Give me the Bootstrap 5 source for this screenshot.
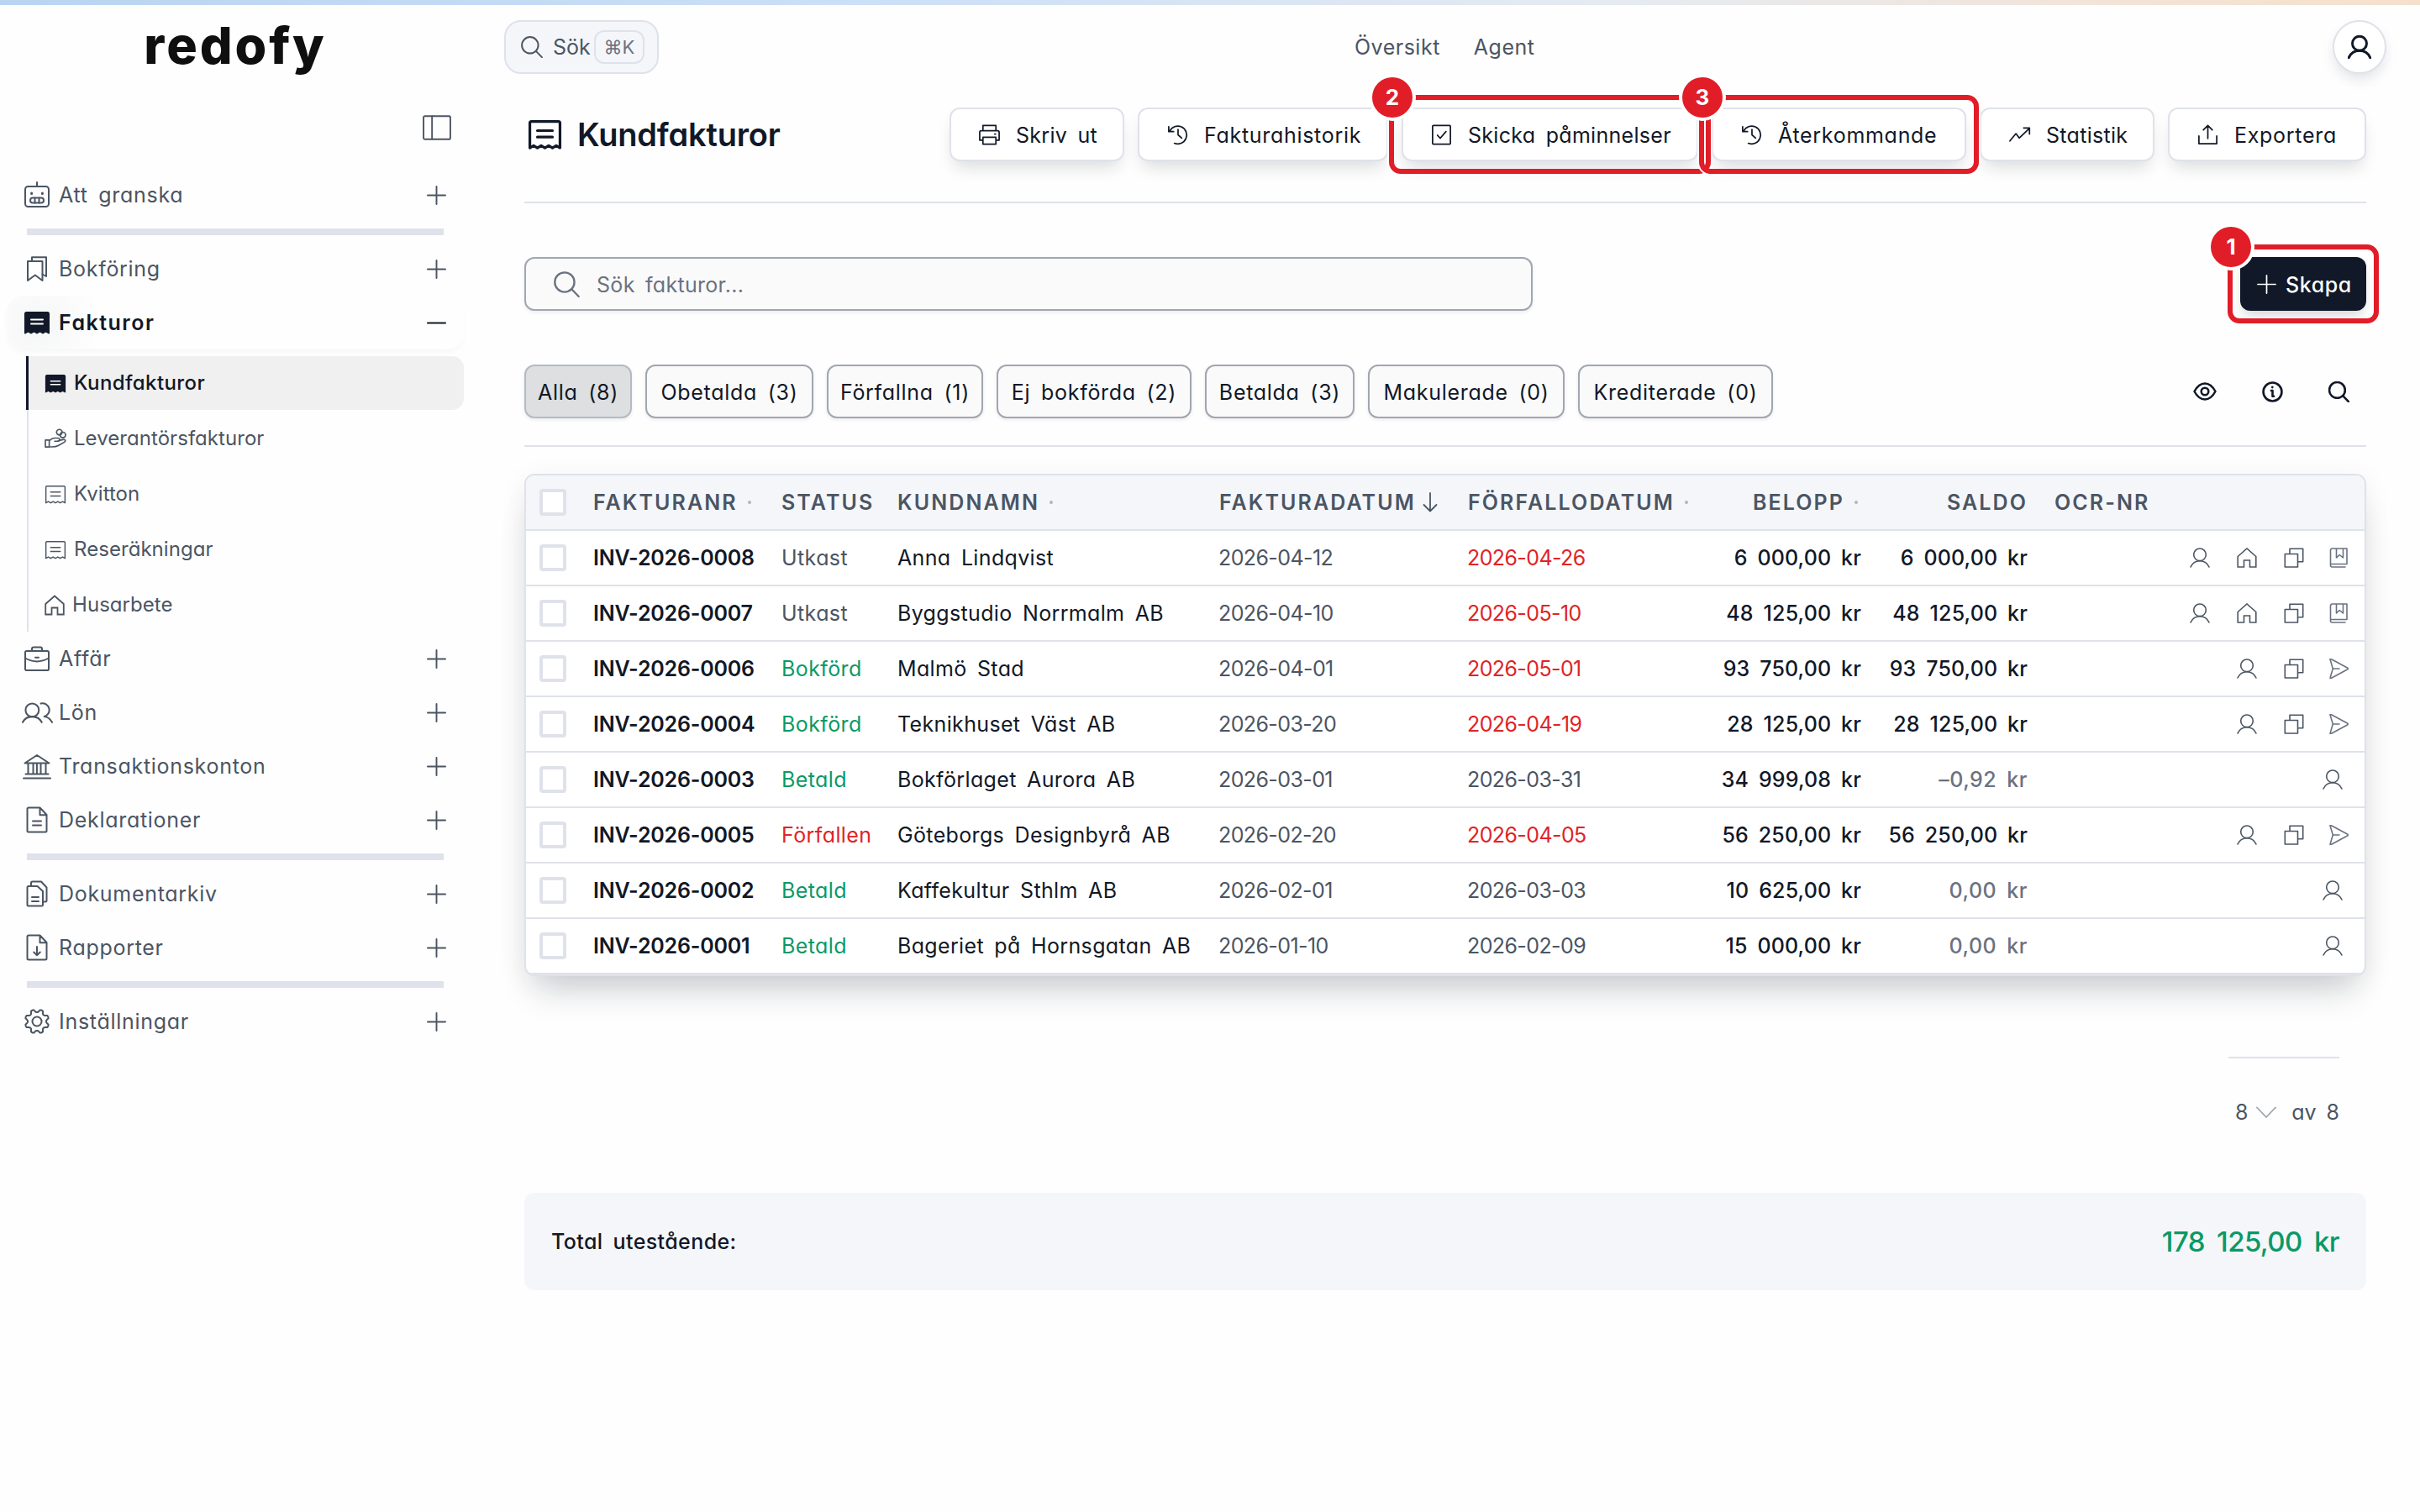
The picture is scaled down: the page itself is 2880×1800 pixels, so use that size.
<!DOCTYPE html>
<html lang="sv">
<head>
  <meta charset="UTF-8" />
  <meta name="viewport" content="width=device-width, initial-scale=1" />
  <title>Kundfakturor - redofy</title>
  <link href="https://cdn.jsdelivr.net/npm/bootstrap@5.3.2/dist/css/bootstrap.min.css" rel="stylesheet" />
  <style>
    :root { --ink: #111827; --grey: #4b5563; --soft: #6b7280; --line: #dfe2ea; --panel: #f4f6fa; }
    body {
      font-family: Inter, "Liberation Sans", sans-serif;
      font-feature-settings: "cv11";
      font-size: 25px; line-height: 32px;
      letter-spacing: .8px; word-spacing: 5px;
      color: var(--ink); background: #fefefe;
      border-top: 6px solid transparent;
      border-image: linear-gradient(90deg, #b9d4f1, #cbdff7 35%, #e6ebf0 68%, #f3e3d6 88%, #f5e0cc) 1;
      border-left: 0; border-right: 0; border-bottom: 0;
      height: 1800px; overflow: hidden;
    }
    svg { display: block; flex: none; fill: none; stroke: currentColor; stroke-width: 1.8; stroke-linecap: round; stroke-linejoin: round; }
    .thick { stroke-width: 2.5; }
    .gap-16 { gap: 16px; }
    .mt-32 { margin-top: 32px; }
    .mt-48 { margin-top: 48px; }
    .mt-64 { margin-top: 64px; }

    /* topbar */
    .topbar { height: 100px; padding-right: 40px; }
    .brand { width: 560px; font-size: 61px; font-weight: 800; letter-spacing: 2.9px; line-height: 64px; color: #0f0f0f; padding-bottom: 5px; }
    .quick { margin-left: 40px; width: 184px; height: 64px; padding: 0 15px 0 18px; border: 2px solid var(--line); border-radius: 20px; background: var(--panel); color: var(--grey); letter-spacing: 0; }
    .keys { width: 60px; height: 40px; border: 2px solid var(--line); border-radius: 12px; font-size: 22px; line-height: 36px; letter-spacing: 0; color: var(--soft); margin-left: auto; }
    .toplinks { gap: 40px; margin-left: 828px; color: var(--grey); letter-spacing: .5px; }
    .avatar { width: 64px; height: 64px; border: 2px solid var(--line); background: #fff; box-shadow: 0 8px 16px -2px rgba(17, 24, 39, .12); }

    /* sidebar */
    .sidebar { width: 584px; color: var(--grey); }
    .toggler { height: 94px; padding: 31px 47px 0 0; }
    .side-link { height: 64px; padding: 0 53px 0 28px; }
    .side-link svg { stroke-width: 2; }
    .side-link .ico { width: 32px; }
    .side-link .lbl { margin-left: 10px; letter-spacing: .7px; }
    .side-link.open { color: var(--ink); font-weight: 600; margin: 0 32px 0 8px; padding: 0 21px 0 20px; border-radius: 20px; box-shadow: 0 4px 8px -3px rgba(17, 24, 39, .05); background: radial-gradient(circle at 36px 34px, #f5f6f6, #fefefe 76px); }
    .side-link.open .lbl { letter-spacing: 1.5px; }
    .side-sep { height: 8px; margin: 8px 56px 8px 32px; background: var(--line); }
    .sub { margin: 8px 32px 0 32px; border-left: 2px solid var(--line); font-size: 24px; letter-spacing: .05px; }
    .sub a { height: 64px; margin-bottom: 2px; padding-left: 19px; color: inherit; text-decoration: none; }
    .sub a:last-child { margin-bottom: 0; }
    .sub a span { margin-left: 9px; }
    .sub a.now { background: #f0f0f0; color: var(--ink); font-weight: 500; letter-spacing: .4px; margin-left: -3px; border-left: 3px solid var(--ink); border-radius: 0 14px 14px 0; }

    /* content */
    .content { padding: 22px 64px 0 40px; }
    h1 { font-size: 38px; font-weight: 600; letter-spacing: -.2px; line-height: 64px; margin: 0 0 0 18px; }
    .tool { height: 64px; padding: 0 0 0 32px; gap: 18px; border: 2px solid var(--line); border-radius: 12px; background: #fff; box-shadow: 0 12px 20px -6px rgba(17, 24, 39, .16); position: relative; white-space: nowrap; letter-spacing: .7px; }
    .tool.tight { letter-spacing: .3px; }
    .tool > span, .find > span, .create > span { padding-top: 2px; }
    .rule { height: 2px; background: var(--line); }
    .find { width: 1200px; height: 64px; padding-left: 33px; gap: 20px; border: 2px solid #a1a6b2; border-radius: 12px; background: #fafafa; color: var(--soft); letter-spacing: .3px; box-shadow: 0 2px 4px rgba(17, 24, 39, .08); }
    .create { width: 150px; height: 64px; padding-left: 20px; gap: 11px; border-radius: 12px; background: var(--ink); color: #fff; font-weight: 500; letter-spacing: .6px; position: relative; box-shadow: 0 8px 14px -4px rgba(17, 24, 39, .2); }
    .chip { height: 64px; padding: 2px 0 0; border: 2px solid #a1a6b2; border-radius: 12px; background: #fafafa; box-shadow: 0 2px 4px rgba(17, 24, 39, .08); white-space: nowrap; letter-spacing: .7px; }
    .chip.on { background: #dddfe1; border-color: #b6bac3; }
    .view-icons { gap: 54px; padding-right: 20px; }

    /* numbered callouts laid over the buttons */
    .callout { position: absolute; inset: -17px; border: 6px solid #e11d28; border-radius: 14px; box-shadow: 0 0 0 2px #fff; z-index: 2; pointer-events: none; }
    .create .callout { inset: -15px; }
    .callout b { position: absolute; left: -26px; top: -27px; width: 48px; height: 48px; border-radius: 50%; background: #e11d28; box-shadow: 0 0 0 4px #fff; color: #fff; font-size: 26px; font-weight: 700; line-height: 48px; letter-spacing: 0; text-align: center; }

    /* invoice table */
    .sheet { border: 2px solid var(--line); border-radius: 12px; overflow: hidden; background: #fff; box-shadow: 0 28px 40px -14px rgba(17, 24, 39, .2), 0 6px 34px rgba(17, 24, 39, .06); }
    .sheet table { table-layout: fixed; width: 100%; margin: 0; border-collapse: separate; border-spacing: 0; letter-spacing: .4px; white-space: nowrap; }
    .sheet th, .sheet td { height: 66px; padding: 0 16px; border-bottom: 2px solid var(--line); vertical-align: middle; }
    .sheet th { background: var(--panel); color: var(--grey); font-weight: 600; letter-spacing: 2.1px; }
    .sheet td { color: var(--grey); }
    .sheet .strong { color: var(--ink); font-weight: 600; letter-spacing: -.2px; }
    .sheet .name { color: var(--ink); letter-spacing: .35px; }
    .sheet .date { letter-spacing: -.6px; padding-left: 15px; }
    .sheet .sum { font-weight: 500; color: var(--ink); letter-spacing: .15px; text-align: right; }
    .sheet .zero { color: var(--soft); letter-spacing: .5px; }
    .sheet .red { color: #e02424; }
    .sheet .green { color: #0a9966; }
    .sheet .sorted svg { margin-left: 8px; }
    .c-pick { width: 64px; } .c-nr { width: 224px; } .c-status { width: 138px; } .c-name { width: 383px; } .c-date { width: 296px; }
    .c-due { width: 294px; } .c-sum { width: 206px; } .c-saldo { width: 198px; } .c-ocr { width: 160px; }
    .pick { display: block; width: 32px; height: 32px; border: 4px solid var(--line); border-radius: 4px; background: #fff; }
    .dot { display: inline-block; width: 4px; height: 4px; border-radius: 2px; background: #b0b5be; margin-left: 12px; vertical-align: 7px; }
    .acts { gap: 32px; margin-right: 3px; }
    .acts svg { stroke-width: 1.6; }
    .acts svg:nth-last-child(1):not(:first-child) { margin-left: -3px; color: var(--soft); }
    .acts svg:only-child { margin-right: 7px; }

    .pager { width: 132px; margin: 96px 32px 0 auto; color: var(--grey); letter-spacing: 0; }
    .pager .pages { margin: 48px 0 0 8px; }
    .pager svg { margin-left: 10px; color: #9ca3af; }
    .total { height: 116px; margin-top: 80px; padding: 0 32px; border-radius: 12px; background: var(--panel); font-weight: 500; letter-spacing: .4px; }
    .total .amount { font-size: 33px; letter-spacing: -.6px; word-spacing: 6px; color: #0a9966; }
  </style>
</head>
<body>

  <svg width="0" height="0" class="position-absolute">
    <symbol id="search" viewBox="0 0 24 24"><circle cx="10" cy="10" r="9" /><path d="M16.5 16.5 23 23.2" /></symbol>
    <symbol id="user" viewBox="0 0 24 24"><circle cx="12" cy="8.3" r="7.3" /><path d="M1 23c2-4.600 6-7.300 11-7.300s9 2.700 11 7.300" /></symbol>
    <symbol id="users" viewBox="0 0 36 24"><circle cx="12" cy="9" r="7.700" /><path d="M1 23c2-4 6-6.500 11-6.500s9 2.500 11 6.500M22 1.400a7.700 7.700 0 1 1 4 15c4 .4 7 3 9 6.600" /></symbol>
    <symbol id="plus" viewBox="0 0 24 24"><path d="M12 1v22M1 12h22" /></symbol>
    <symbol id="minus" viewBox="0 0 24 24"><path d="M1 12h22" /></symbol>
    <symbol id="panel" viewBox="0 0 32 28"><rect x="1" y="1" width="30" height="26" rx="1.500" /><path d="M10.500 1v26" /></symbol>
    <symbol id="robot" viewBox="0 0 32 32"><path d="M16 1v5" /><rect x="2" y="6" width="28" height="24" rx="3.500" /><rect x="8" y="19.500" width="16" height="6" rx="3" /><path d="M13.500 19.500v6M18.500 19.500v6" /><path d="M9.600 14v.5M22.400 14v.5" stroke-width="3" /></symbol>
    <symbol id="bookmarks" viewBox="0 0 32 32"><path d="M5 7h17.500v23l-8.700-6.500L5 30z" /><path d="M10 7V2.300h17V25l-4.500-2.500" /></symbol>
    <symbol id="receipt" viewBox="0 0 32 28"><path d="M2 26.500V3.500a1.500 1.500 0 0 1 1.500-1.500h25A1.500 1.500 0 0 1 30 3.500v23l-3.500-2-3.500 2-3.500-2-3.500 2-3.500-2-3.500 2-3.500-2z" /><path d="M9 10.500h14M9 16.500h14" /></symbol>
    <symbol id="receipt-full" viewBox="0 0 32 28"><path fill="currentColor" d="M2 26.500V3.500a1.500 1.500 0 0 1 1.500-1.500h25A1.500 1.500 0 0 1 30 3.500v23l-3.500-2-3.500 2-3.500-2-3.500 2-3.500-2-3.500 2-3.500-2z" /><path stroke="#fff" d="M9 10.500h14M9 15.500h14" /></symbol>
    <symbol id="hand" viewBox="0 0 28 26"><circle cx="19" cy="5" r="3.600" /><circle cx="23.500" cy="8.500" r="3.600" /><path d="M1 15h5v9H1zM6 16c3-3 5-3.500 7-3.500h4c3 0 3 4 0 4h-4M17.500 16l6-1.500c3.500-.8 4 2 2 3.200L18 22c-4 2.500-9 1.800-12 1.800" /></symbol>
    <symbol id="house" viewBox="0 0 24 24"><path d="M1.200 10.500 12 1l10.800 9.500V23H15.500v-8H8.500v8H1.200z" stroke-linejoin="miter" /></symbol>
    <symbol id="case" viewBox="0 0 32 32"><rect x="2" y="7" width="28" height="23" rx="1.800" /><path d="M10 7V4.500A2 2 0 0 1 12 2.500h8a2 2 0 0 1 2 2V7M2 15.500c9 5 19 5 28 0M14 14.800h4" /></symbol>
    <symbol id="bank" viewBox="0 0 34 32"><path d="M1 30.500h32M3.500 25.500h27M2.500 12.500h29L17 3zM6.500 13v12M12.500 13v12M16.900 13v12M21.500 13v12M27.500 13v12" /></symbol>
    <symbol id="doc" viewBox="0 0 32 32"><path d="M19.500 1.500H6A1.500 1.500 0 0 0 4.500 3v26A1.500 1.500 0 0 0 6 30.500h20a1.500 1.500 0 0 0 1.500-1.500V10zM19.500 1.500v8.800h8" /><path d="M11 17.500h10M11 22.500h10" /></symbol>
    <symbol id="docs" viewBox="0 0 32 32"><path d="M16.500 7H6a1.500 1.500 0 0 0-1.500 1.500v20.500A1.500 1.500 0 0 0 6 30.500h15.500a1.500 1.500 0 0 0 1.500-1.500V13z" /><path d="M9 6.500V3A1.500 1.500 0 0 1 10.500 1.500H21l6.500 7V24a1.500 1.500 0 0 1-1.500 1.500h-2.500M10 20h8M10 25h8" /></symbol>
    <symbol id="docdown" viewBox="0 0 32 32"><path d="M19.500 1.500H6A1.500 1.500 0 0 0 4.500 3v26A1.500 1.500 0 0 0 6 30.500h20a1.500 1.500 0 0 0 1.500-1.500V10zM19.500 1.500v8.800h8M16 15v10M12.200 21.500 16 25.200l3.800-3.700" /></symbol>
    <symbol id="gear" viewBox="0 0 32 32"><circle cx="16" cy="16" r="5.500" /><path id="gearpath" d="" /></symbol>
    <symbol id="printer" viewBox="0 0 28 28"><path d="M6 9V2.500h16V9M6 20.500H2V11a2 2 0 0 1 2-2h20a2 2 0 0 1 2 2v9.500h-4M6 17h16v8.500H6zM20.500 13h1" /></symbol>
    <symbol id="history" viewBox="0 0 28 28"><path d="M4.200 9.500A11 11 0 1 1 10 24.400M3 4v6h6M14.500 7.500V14l4.500 4" /></symbol>
    <symbol id="checkbox" viewBox="0 0 28 28"><rect x="3" y="2.500" width="22" height="23" rx="1" /><path d="m9 14.500 3.500 3.700L19.500 10" /></symbol>
    <symbol id="trend" viewBox="0 0 28 28"><path d="m2 21.500 7.500-9 4 5.500L26 6M19 5.500h7.200V13" /></symbol>
    <symbol id="upload" viewBox="0 0 28 28"><path d="M3 15.500V25h22v-9.500M14 18.500V2.500M8.500 8 14 2.500 19.500 8" /></symbol>
    <symbol id="eye" viewBox="0 0 28 28"><path d="M1.500 14C5 7.500 9 4.500 14 4.500s9 3 12.500 9.500c-3.500 6.500-7.500 9.500-12.500 9.500S5 20.500 1.500 14z" /><circle cx="14" cy="14" r="4.300" /></symbol>
    <symbol id="info" viewBox="0 0 24 24"><circle cx="12" cy="12" r="10.500" /><path d="M10.500 10.500H12v6.500h1.500M11.800 6.500v.3" /></symbol>
    <symbol id="copy" viewBox="0 0 24 24"><path d="M1.300 7.500h15.200V23H1.300zM7 7V1.300h15.700v15.500H17" /></symbol>
    <symbol id="book" viewBox="0 0 24 24"><path d="M4.500 1h17.500v18.500H2.500V3a2 2 0 0 1 2-2M2.500 19.500v1.500a2 2 0 0 0 2 2H20M9.500 1v11l3.700-3.500L17.500 12V1" /></symbol>
    <symbol id="send" viewBox="0 0 24 24"><path d="M2.200 1.500C1.500.5 2.500.2 3.500.8L22.500 11c1 .7 1 1.300 0 2L3.500 23.300c-1 .6-1.800.2-1.300-.8L5.300 12zM5.500 12h7.500" /></symbol>
    <symbol id="down" viewBox="0 0 24 24"><path d="M1 6.500 12 18 23 6.500" /></symbol>
    <symbol id="arrow" viewBox="0 0 18 24"><path d="M9 1v21.500M1.500 15 9 22.500 16.500 15" /></symbol>
  </svg>

  <header class="topbar d-flex align-items-center">
    <div class="brand text-center">redofy</div>
    <div class="quick d-flex align-items-center">
      <svg width="26" height="26"><use href="#search" /></svg>
      <span class="ms-2 ps-1">Sök</span>
      <span class="keys text-center">⌘K</span>
    </div>
    <nav class="toplinks d-flex"><span>Översikt</span><span>Agent</span></nav>
    <div class="avatar rounded-circle d-flex align-items-center justify-content-center ms-auto">
      <svg class="thick" width="28" height="28"><use href="#user" /></svg>
    </div>
  </header>

  <div class="d-flex">
    <aside class="sidebar flex-shrink-0">
      <div class="toggler d-flex justify-content-end"><svg width="34" height="30"><use href="#panel" /></svg></div>
      <div id="menu"></div>
    </aside>

    <main class="content flex-grow-1">
      <div class="d-flex align-items-center">
        <svg class="ms-1 thick" width="41" height="36"><use href="#receipt" /></svg>
        <h1>Kundfakturor</h1>
        <div id="tools" class="d-flex ms-auto gap-16"></div>
      </div>
      <div class="rule mt-48"></div>

      <div class="d-flex justify-content-between mt-64">
        <div class="find d-flex align-items-center">
          <svg width="31" height="31"><use href="#search" /></svg>
          <span>Sök fakturor...</span>
        </div>
        <div class="create d-flex align-items-center">
          <svg width="23" height="23"><use href="#plus" /></svg><span>Skapa</span>
          <div class="callout"><b>1</b></div>
        </div>
      </div>

      <div class="d-flex align-items-center justify-content-between mt-64">
        <div id="chips" class="d-flex gap-16"></div>
        <div class="view-icons d-flex align-items-center">
          <svg class="thick" width="28" height="28"><use href="#eye" /></svg>
          <svg class="thick" width="25" height="25"><use href="#info" /></svg>
          <svg class="thick" width="25" height="25"><use href="#search" /></svg>
        </div>
      </div>
      <div class="rule mt-32"></div>

      <div class="sheet mt-32">
        <table>
          <colgroup>
            <col class="c-pick"><col class="c-nr"><col class="c-status"><col class="c-name"><col class="c-date">
            <col class="c-due"><col class="c-sum"><col class="c-saldo"><col class="c-ocr"><col>
          </colgroup>
          <thead>
            <tr>
              <th><span class="pick"></span></th>
              <th>FAKTURANR<span class="dot"></span></th>
              <th>STATUS</th>
              <th>KUNDNAMN<span class="dot"></span></th>
              <th><span class="sorted d-flex align-items-center">FAKTURADATUM<svg width="18" height="24"><use href="#arrow" /></svg></span></th>
              <th>FÖRFALLODATUM<span class="dot"></span></th>
              <th class="text-end">BELOPP<span class="dot me-1"></span></th>
              <th class="text-end">SALDO</th>
              <th>OCR-NR</th>
              <th></th>
            </tr>
          </thead>
          <tbody id="rows"></tbody>
        </table>
      </div>

      <div class="pager">
        <div class="rule"></div>
        <div class="pages d-flex align-items-center">
          <span>8</span><svg width="24" height="24"><use href="#down" /></svg><span class="ms-auto">av 8</span>
        </div>
      </div>

      <div class="total d-flex align-items-center justify-content-between">
        <span>Total utestående:</span><span class="amount">178 125,00 kr</span>
      </div>
    </main>
  </div>

  <script>
    const icon = (id, w, h) => `<svg width="${w}" height="${h || w}"><use href="#${id}" /></svg>`;

    // kugghjul med åtta mjuka kuggar
    let kugg = "";
    for (let a = 0; a <= 360; a += 5) {
      const r = 12.700 + 1.700 * Math.tanh(2.200 * Math.cos(8 * (a + 22.5) * Math.PI / 180));
      kugg += (a ? "L" : "M") + (16 + r * Math.cos(a * Math.PI / 180)).toFixed(2) + " " + (16 + r * Math.sin(a * Math.PI / 180)).toFixed(2);
    }
    document.getElementById("gearpath").setAttribute("d", kugg + "Z");

    const menu = [
      ["robot", "Att granska"], null,
      ["bookmarks", "Bokföring"],
      ["receipt-full", "Fakturor", [
        ["receipt-full", "Kundfakturor"], ["hand", "Leverantörsfakturor"], ["receipt", "Kvitton"],
        ["receipt", "Reseräkningar"], ["house", "Husarbete"]
      ]],
      ["case", "Affär"], ["users", "Lön"], ["bank", "Transaktionskonton"], ["doc", "Deklarationer"], null,
      ["docs", "Dokumentarkiv"], ["docdown", "Rapporter"], null,
      ["gear", "Inställningar"]
    ];
    const matt = { users: [37, 25], "receipt-full": [32, 28], bank: [34, 32] };
    const mattSub = { hand: [26, 24], house: [24, 25] };

    document.getElementById("menu").innerHTML = menu.map(m => {
      if (!m) return `<div class="side-sep"></div>`;
      const [ic, text, sub] = m;
      let html = `<div class="side-link d-flex align-items-center${sub ? " open" : ""}">
        <span class="ico d-flex justify-content-center">${icon(ic, ...(matt[ic] || [32, 32]))}</span>
        <span class="lbl">${text}</span>
        <span class="ms-auto">${icon(sub ? "minus" : "plus", 23)}</span>
      </div>`;
      if (sub) {
        html += `<div class="sub">` + sub.map(([i, t], n) =>
          `<a class="d-flex align-items-center${n === 0 ? " now" : ""}">${icon(i, ...(mattSub[i] || [26, 23]))}<span>${t}</span></a>`
        ).join("") + `</div>`;
      }
      return html;
    }).join("");

    // ikon, text, bredd, markering
    const tools = [
      ["printer", "Skriv ut", 208], ["history", "Fakturahistorik", 298], ["checkbox", "Skicka påminnelser", 353, 2],
      ["history", "Återkommande", 303, 3], ["trend", "Statistik", 208], ["upload", "Exportera", 236]
    ];
    document.getElementById("tools").innerHTML = tools.map(([i, t, w, n]) =>
      `<div class="tool d-flex align-items-center${t.includes("S") ? " tight" : ""}" style="width:${w}px">${icon(i, 27)}<span>${t}</span>${n ? `<div class="callout"><b>${n}</b></div>` : ""}</div>`
    ).join("");

    const chips = [["Alla (8)", 128], ["Obetalda (3)", 200], ["Förfallna (1)", 186], ["Ej bokförda (2)", 232],
      ["Betalda (3)", 178], ["Makulerade (0)", 234], ["Krediterade (0)", 232]];
    document.getElementById("chips").innerHTML = chips.map(([t, w], n) =>
      `<div class="chip d-flex align-items-center justify-content-center${n ? "" : " on"}" style="width:${w}px">${t}</div>`
    ).join("");

    const fakturor = [
      ["0008", "Utkast", "Anna Lindqvist", "2026-04-12", "2026-04-26", "6 000,00", "6 000,00", "user house copy book"],
      ["0007", "Utkast", "Byggstudio Norrmalm AB", "2026-04-10", "2026-05-10", "48 125,00", "48 125,00", "user house copy book"],
      ["0006", "Bokförd", "Malmö Stad", "2026-04-01", "2026-05-01", "93 750,00", "93 750,00", "user copy send"],
      ["0004", "Bokförd", "Teknikhuset Väst AB", "2026-03-20", "2026-04-19", "28 125,00", "28 125,00", "user copy send"],
      ["0003", "Betald", "Bokförlaget Aurora AB", "2026-03-01", "2026-03-31", "34 999,08", "–0,92", "user"],
      ["0005", "Förfallen", "Göteborgs Designbyrå AB", "2026-02-20", "2026-04-05", "56 250,00", "56 250,00", "user copy send"],
      ["0002", "Betald", "Kaffekultur Sthlm AB", "2026-02-01", "2026-03-03", "10 625,00", "0,00", "user"],
      ["0001", "Betald", "Bageriet på Hornsgatan AB", "2026-01-10", "2026-02-09", "15 000,00", "0,00", "user"]
    ];
    const farg = { "Bokförd": "green", "Betald": "green", "Förfallen": "red", "Utkast": "" };

    document.getElementById("rows").innerHTML = fakturor.map(([nr, st, namn, datum, forfall, belopp, saldo, ikoner]) => {
      const klar = st === "Betald";
      return `<tr>
        <td><span class="pick"></span></td>
        <td class="strong">INV-2026-${nr}</td>
        <td class="${farg[st]}">${st}</td>
        <td class="name">${namn}</td>
        <td class="date">${datum}</td>
        <td class="date ${klar ? "" : "red"}">${forfall}</td>
        <td class="sum">${belopp} kr</td>
        <td class="sum ${klar ? "zero" : ""}">${saldo} kr</td>
        <td></td>
        <td><div class="acts d-flex justify-content-end">${ikoner.split(" ").map(i => icon(i, 24)).join("")}</div></td>
      </tr>`;
    }).join("");
  </script>
  <script src="https://cdn.jsdelivr.net/npm/bootstrap@5.3.2/dist/js/bootstrap.bundle.min.js"></script>
</body>
</html>
